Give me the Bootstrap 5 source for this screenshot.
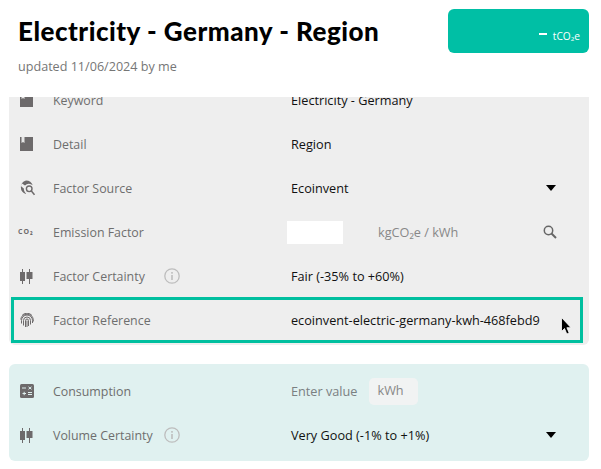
<!DOCTYPE html>
<html lang="en">
<head>
<meta charset="utf-8">
<title>Electricity - Germany - Region</title>
<link href="https://cdn.jsdelivr.net/npm/bootstrap@5.3.0/dist/css/bootstrap.min.css" rel="stylesheet">
<style>
html,body{height:469px;overflow:hidden;background:#fff}
body{font-family:"Open Sans","Noto Sans",sans-serif;font-size:12.7px;color:#111}
.page-wrap{padding:9px 12px 0 9px}
.head-row{height:88px}
.title-box{padding:0 0 0 9px}
.doc-title{font-family:"Lato",sans-serif;font-weight:900;font-size:26px;line-height:44px;margin:0;color:#000;letter-spacing:.5px}
.doc-sub{font-size:12.6px;color:#767676;line-height:18px;margin-top:5px}
.total-box{width:141px;height:44px;background:#00bfa5;border-radius:6px;color:#fff;padding:0 9px 9px 0}
.total-dash{display:block;width:8px;height:2px;background:#fff;margin:0 6px 9px 0}
.total-unit{font-size:10.2px;line-height:15px;margin-bottom:0}
.panel-clip{background:#eee;border-radius:0 0 6px 6px;height:248px;overflow:hidden}
.panel-inner{margin-top:-19px}
.data-row{height:44px;padding:0 0 0 11px}
.data-row.hl{outline:3px solid #00bf9f;outline-offset:-3px;margin:0 6px 0 2px;padding-left:9px;height:46px;margin-top:-1px}
.ico-cell{width:22px;flex:none;color:#6d6a6b;line-height:0}
.lbl-cell{width:249px;flex:none;padding:2px 0 0 11px;color:#6e6e6e;font-size:12.4px;display:flex;align-items:center}
.lbl-txt{width:111px;flex:none}
.val-cell{flex:1;min-width:0;padding:2px 33px 0 0}
.hint-ic{color:#bdbdbd;line-height:0;margin-top:-2px}
.caret-ic{width:0;height:0;border-left:5px solid transparent;border-right:5px solid transparent;border-top:6px solid #000;margin-top:-2px}
.num-box{width:56px;height:23px;background:#fff;margin:-2px 0 0 -4px}
.muted-u{color:#888;margin-left:35px}
.lens{margin:-3px -1px 0 auto;color:#666;line-height:0}
.co-ic{font-size:7px;font-weight:700;letter-spacing:1px;color:#6d6a6b;line-height:12px;display:block;margin-left:-2px}
.globe-ic{display:block;margin-left:-1px}
.panel-b{background:#e0f1f0;border-radius:6px;margin-top:19px;height:97px;padding:5px 0}
.panel-b .data-row{height:44px}
.enter-ph{color:#7a8082}
.unit-chip{background:#f1f3f3;border-radius:5px;color:#888;width:49px;height:27px;margin:-2px 0 0 12px;padding-left:8px;display:flex;align-items:center}
.pointer{position:absolute;right:11px;top:20px;line-height:0}
.row-pos{position:relative}
</style>
</head>
<body>
<div class="page-wrap">
  <div class="head-row d-flex justify-content-between align-items-start">
    <div class="title-box">
      <h1 class="doc-title">Electricity - Germany - Region</h1>
      <div class="doc-sub">updated 11/06/2024 by me</div>
    </div>
    <div class="total-box d-flex justify-content-end align-items-end">
      <span class="total-dash"></span><span class="total-unit">tCO₂e</span>
    </div>
  </div>

  <div class="panel-clip">
    <div class="panel-inner">
      <div class="data-row d-flex align-items-center">
        <div class="ico-cell"><svg width="13" height="14" viewBox="0 0 13 14"><path fill="currentColor" d="M0 0h13v14H0z"/><path fill="#e6e6e6" d="M1.500 0h3v6L3 5 1.500 6z"/></svg></div>
        <div class="lbl-cell"><span class="lbl-txt">Keyword</span></div>
        <div class="val-cell">Electricity - Germany</div>
      </div>
      <div class="data-row d-flex align-items-center">
        <div class="ico-cell"><svg width="13" height="14" viewBox="0 0 13 14"><path fill="currentColor" d="M0 0h13v14H0z"/><path fill="#e6e6e6" d="M1.500 0h3v6L3 5 1.500 6z"/></svg></div>
        <div class="lbl-cell"><span class="lbl-txt">Detail</span></div>
        <div class="val-cell">Region</div>
      </div>
      <div class="data-row d-flex align-items-center">
        <div class="ico-cell"><svg class="globe-ic" width="16" height="16" viewBox="0 0 16 16"><path fill="currentColor" d="M7 .500a7 7 0 0 1 6.700 4.800A5.200 5.200 0 0 0 6 5.500L3 3.500 1.800 6l3 2.500c0 2 .8 3.600 2.200 5v.5A7 7 0 0 1 7 .500z"/><circle cx="10.200" cy="8.800" r="2.800" fill="none" stroke="currentColor" stroke-width="1.400"/><path d="M12.200 10.800l3.300 4" stroke="currentColor" stroke-width="1.500"/></svg></div>
        <div class="lbl-cell"><span class="lbl-txt">Factor Source</span></div>
        <div class="val-cell d-flex justify-content-between align-items-center">Ecoinvent<span class="caret-ic"></span></div>
      </div>
      <div class="data-row d-flex align-items-center">
        <div class="ico-cell"><span class="co-ic">CO₂</span></div>
        <div class="lbl-cell"><span class="lbl-txt">Emission Factor</span></div>
        <div class="val-cell d-flex align-items-center"><span class="num-box"></span><span class="muted-u">kgCO₂e / kWh</span>
          <span class="lens"><svg width="14" height="14" viewBox="0 0 14 14"><circle cx="5.500" cy="5.500" r="4.200" fill="none" stroke="currentColor" stroke-width="1.500"/><path d="M8.500 8.500l4.500 4.500" stroke="currentColor" stroke-width="2"/></svg></span></div>
      </div>
      <div class="data-row d-flex align-items-center">
        <div class="ico-cell"><svg width="13" height="15" viewBox="0 0 13 15"><path fill="currentColor" d="M2 0h1v3h2v9H3v3H2v-3H0V3h2zM9 0h1v3h2.500v7H10v5H9v-5H6.500V3H9z"/></svg></div>
        <div class="lbl-cell"><span class="lbl-txt">Factor Certainty</span><span class="hint-ic"><svg width="16" height="16" viewBox="0 0 16 16"><circle cx="8" cy="8" r="7.200" fill="none" stroke="currentColor" stroke-width="1.300"/><rect x="7.200" y="7" width="1.600" height="5" fill="currentColor"/><rect x="7.200" y="4" width="1.600" height="1.700" fill="currentColor"/></svg></span></div>
        <div class="val-cell">Fair (-35% to +60%)</div>
      </div>
      <div class="data-row hl row-pos d-flex align-items-center">
        <div class="ico-cell"><svg width="14" height="15" viewBox="0 0 14 15" fill="none" stroke="currentColor" stroke-width="1"><path d="M2 2.500A6.500 6.500 0 0 1 12 2.500"/><path d="M.7 6.500a6.400 6.400 0 0 1 12.600 0v2"/><path d="M1.500 10.500v-3a5.500 5.500 0 0 1 11 0V10"/><path d="M3.500 12.500V7.500a3.500 3.500 0 0 1 7 0v4"/><path d="M5.500 14V7.500a1.500 1.500 0 0 1 3 0V13"/><path d="M7 7.500V14"/></svg></div>
        <div class="lbl-cell"><span class="lbl-txt">Factor Reference</span></div>
        <div class="val-cell">ecoinvent-electric-germany-kwh-468febd9</div>
        <span class="pointer"><svg width="11" height="18" viewBox="0 0 11 18"><path fill="#000" stroke="#fff" stroke-width=".8" d="M.5.500v14l3-3 2.300 5.500 2.400-1-2.300-5.300H10z"/></svg></span>
      </div>
    </div>
  </div>

  <div class="panel-b">
    <div class="data-row d-flex align-items-center">
      <div class="ico-cell"><svg width="14" height="14" viewBox="0 0 14 14"><rect width="14" height="14" rx="1.500" fill="currentColor"/><path d="M2 4h4M2.500 9.500h3.500M4.200 7.800v3.400M8 8.500h4M8 10.500h4M8.500 2.800l3 2.500M11.500 2.800l-3 2.500" stroke="#e0f1f0" stroke-width="1"/></svg></div>
      <div class="lbl-cell"><span class="lbl-txt">Consumption</span></div>
      <div class="val-cell d-flex align-items-center"><span class="enter-ph">Enter value</span><span class="unit-chip">kWh</span></div>
    </div>
    <div class="data-row d-flex align-items-center">
      <div class="ico-cell"><svg width="13" height="15" viewBox="0 0 13 15"><path fill="currentColor" d="M2 0h1v3h2v9H3v3H2v-3H0V3h2zM9 0h1v3h2.500v7H10v5H9v-5H6.500V3H9z"/></svg></div>
      <div class="lbl-cell"><span class="lbl-txt">Volume Certainty</span><span class="hint-ic"><svg width="16" height="16" viewBox="0 0 16 16"><circle cx="8" cy="8" r="7.200" fill="none" stroke="currentColor" stroke-width="1.300"/><rect x="7.200" y="7" width="1.600" height="5" fill="currentColor"/><rect x="7.200" y="4" width="1.600" height="1.700" fill="currentColor"/></svg></span></div>
      <div class="val-cell d-flex justify-content-between align-items-center">Very Good (-1% to +1%)<span class="caret-ic"></span></div>
    </div>
  </div>
</div>
<script src="https://cdn.jsdelivr.net/npm/bootstrap@5.3.0/dist/js/bootstrap.bundle.min.js"></script>
</body>
</html>
